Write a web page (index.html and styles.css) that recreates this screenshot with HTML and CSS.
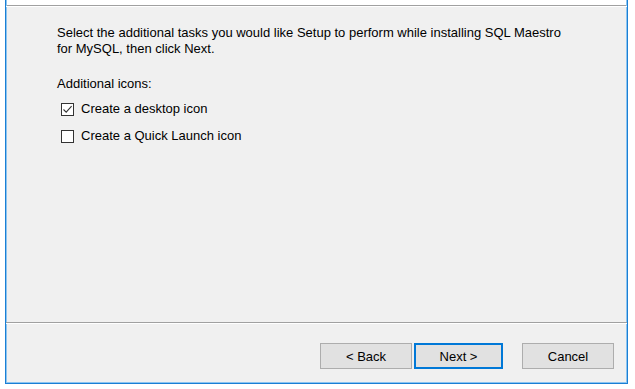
FILE: index.html
```html
<!DOCTYPE html>
<html lang="en">
<head>
    <meta charset="UTF-8">
    <title>Setup - SQL Maestro for MySQL</title>
    <link rel="stylesheet" href="styles.css">
</head>
<body>
    <div class="wizard">
        <div class="header-tail"></div>
        <div class="content">
            <p class="intro">Select the additional tasks you would like Setup to perform while installing SQL Maestro for MySQL, then click Next.</p>
            <div class="group-label">Additional icons:</div>
            <label class="check">
                <span class="box checked">
                    <svg width="11" height="11" viewBox="0 0 11 11"><path d="M1.5 5.5 L4.2 8.2 L9.6 2.2" fill="none" stroke="#333" stroke-width="1.1"/></svg>
                </span>
                Create a desktop icon
            </label>
            <label class="check">
                <span class="box"></span>
                Create a Quick Launch icon
            </label>
        </div>
        <div class="buttons">
            <button class="btn">&lt; Back</button>
            <button class="btn default">Next &gt;</button>
            <button class="btn cancel">Cancel</button>
        </div>
    </div>
</body>
</html>
```

FILE: styles.css
```css
* {
    box-sizing: border-box;
}

body {
    margin: 0;
    background: #ffffff;
    font-family: "Liberation Sans", Arial, sans-serif;
    font-size: 13px;
    color: #000;
}

.wizard {
    margin-left: 5px;
    width: 623px;
    height: 384px;
    border: 1px solid #1a7fd4;
    border-top: none;
    box-shadow: inset 1px 0 0 #8cc4f0, inset -1px 0 0 #8cc4f0, inset 0 -1px 0 #8cc4f0;
    background: #f0f0f0;
    display: flex;
    flex-direction: column;
}

.header-tail {
    height: 6px;
    background: #fff;
    border-bottom: 1px solid #a0a0a0;
    margin-left: 1px;
    margin-right: 1px;
}

.content {
    flex: 1;
    padding: 18px 0 0 51px;
    border-top: 1px solid #fff;
    border-bottom: 1px solid #a0a0a0;
}

.intro {
    margin: 0;
    width: 522px;
    line-height: 16px;
}

.group-label {
    margin-top: 19px;
    line-height: 16px;
}

.check {
    display: flex;
    align-items: center;
    gap: 7px;
    margin-top: 9px;
    margin-left: 4px;
    line-height: 16px;
}

.check + .check {
    margin-top: 11px;
}

.box {
    width: 13px;
    height: 13px;
    border: 1px solid #333;
    background: #fff;
    display: flex;
    align-items: center;
    justify-content: center;
}

.buttons {
    height: 60px;
    border-top: 1px solid #fff;
    display: flex;
    align-items: flex-start;
    padding: 19px 13px 0 0;
    justify-content: flex-end;
    gap: 2px;
}

.btn {
    width: 92px;
    height: 26px;
    background: #e1e1e1;
    border: 1px solid #adadad;
    font-family: "Liberation Sans", Arial, sans-serif;
    font-size: 13px;
    color: #000;
    padding: 0;
}

.btn.default {
    border: 2px solid #0078d7;
    width: 89px;
}

.btn.cancel {
    margin-left: 17px;
}
```
